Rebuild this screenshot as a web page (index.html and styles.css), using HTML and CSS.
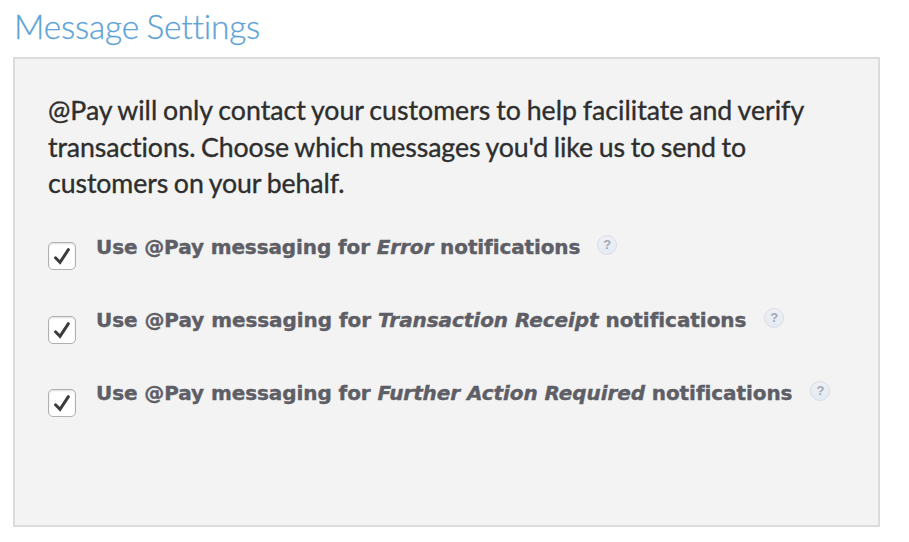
FILE: index.html
```html
<!DOCTYPE html>
<html lang="en">
<head>
<meta charset="utf-8">
<title>Message Settings</title>
<link rel="stylesheet" href="styles.css">
</head>
<body>
<h1 class="title">Message Settings</h1>
<main class="panel">
<p class="intro"><span class="line l1">@Pay will only contact your customers to help facilitate and verify</span><span class="line l2">transactions. Choose which messages you'd like us to send to</span><span class="line l3">customers on your behalf.</span></p>
<div class="option"><span class="box"><svg width="28" height="28" viewBox="0 0 28 28"><path d="M7.5 15.8 12 20.3 20.4 7.7"/></svg></span><span class="label">Use @Pay messaging for <em>Error</em> notifications</span><span class="help">?</span></div>
<div class="option"><span class="box"><svg width="28" height="28" viewBox="0 0 28 28"><path d="M7.5 15.8 12 20.3 20.4 7.7"/></svg></span><span class="label">Use @Pay messaging for <em>Transaction Receipt</em> notifications</span><span class="help">?</span></div>
<div class="option"><span class="box"><svg width="28" height="28" viewBox="0 0 28 28"><path d="M7.5 15.8 12 20.3 20.4 7.7"/></svg></span><span class="label">Use @Pay messaging for <em>Further Action Required</em> notifications</span><span class="help">?</span></div>
</main>
</body>
</html>
```
FILE: styles.css
```css
* { box-sizing: border-box; }
body { margin: 0; background: #fff; overflow: hidden; }
.title { margin: 0; padding: 6px 0 0 14px; height: 57px; font: 300 33.5px/40px Lato, sans-serif; font-variant-ligatures: none; letter-spacing: -.2px; word-spacing: -1.5px; color: #5fa3d6; -webkit-text-stroke: .3px #5fa3d6; white-space: nowrap; }
.panel { width: 867px; height: 470px; margin-left: 13px; padding: 33px 0 0 33px; background: #f3f3f3; border: 2px solid #dcdcdc; }
.intro { height: 110px; margin: 0 0 40px; font: 400 26.7px/36.7px Lato, sans-serif; font-variant-ligatures: none; word-spacing: -1px; color: #2e2e2e; -webkit-text-stroke: .35px #2e2e2e; white-space: nowrap; }
.line { display: block; }
.l2, .l3 { letter-spacing: -.1px; }
.option { display: flex; height: 73px; }
.option:nth-of-type(1) { height: 74px; }
.box { width: 28px; height: 28px; margin-right: 20px; border: 1px solid #b0b0b0; border-radius: 5px; background: #fff; box-shadow: inset 0 1px 2px #ddd; }
.box svg { display: block; margin: -1px; }
.box path { fill: none; stroke: #3c3c3e; stroke-width: 3; stroke-linecap: round; }
.label { margin-top: -9px; font: 700 20px/28px "DejaVu Sans", sans-serif; letter-spacing: -.08px; color: #5e5e66; -webkit-text-stroke: .4px #5e5e66; white-space: nowrap; }
.option:nth-of-type(1) .label { letter-spacing: -.11px; }
.option:nth-of-type(2) .label { margin-top: -10px; letter-spacing: -.06px; }
.option:nth-of-type(3) .label { margin-top: -10px; }
.help { width: 20px; height: 20px; margin: -8px 0 0 18px; border: 1px solid #dcdce3; border-radius: 50%; background: linear-gradient(#eef0f3, #e3ebf5); font: 700 13px/18px "Liberation Sans", sans-serif; text-align: center; color: #a3a8b0; }
.option:nth-of-type(1) .help { margin: -7px 0 0 17px; }
```
